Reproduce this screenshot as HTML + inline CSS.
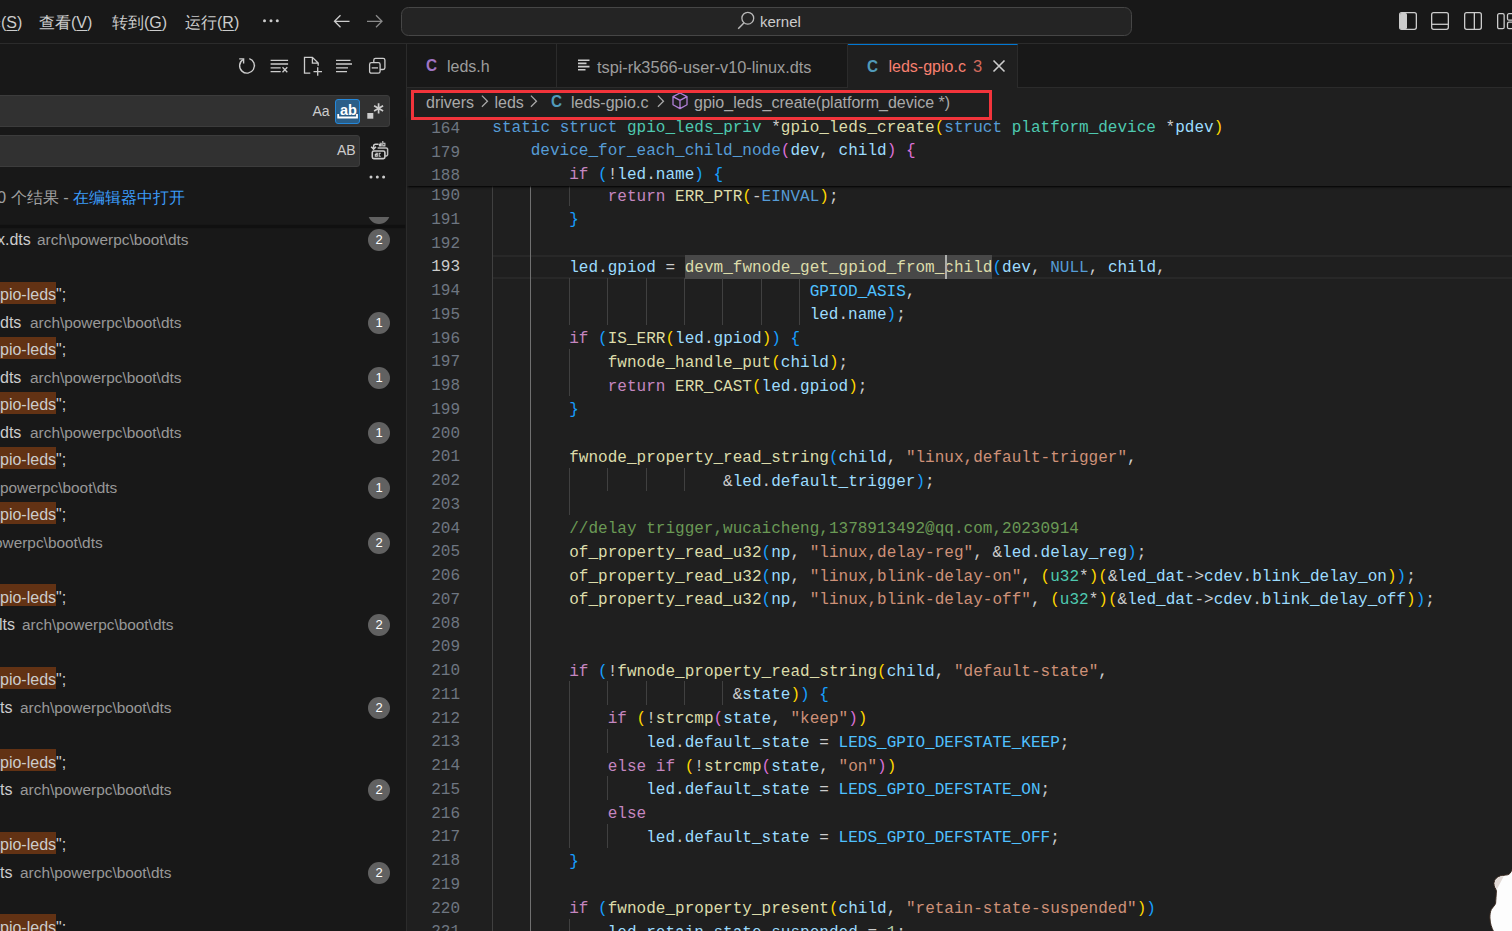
<!DOCTYPE html>
<html><head><meta charset="utf-8">
<style>
*{margin:0;padding:0;box-sizing:border-box}
html,body{width:1512px;height:931px;overflow:hidden;background:#1f1f1f}
body{position:relative;font-family:"Liberation Sans",sans-serif;color:#cccccc}
.abs{position:absolute}
#title{position:absolute;left:0;top:0;width:1512px;height:43.75px;background:#181818;border-bottom:1px solid #2b2b2b}
.menu{position:absolute;top:13px;font-size:16px;color:#cccccc;white-space:nowrap}
.menu u{text-decoration:underline;text-underline-offset:2px}
#cc{position:absolute;left:401px;top:7px;width:731px;height:29px;border:1px solid #464646;border-radius:7.5px;background:#242424}
#sidebar{position:absolute;left:0;top:43.75px;width:407px;height:887.25px;background:#181818;border-right:1px solid #2b2b2b;overflow:hidden}
#tabs{position:absolute;left:407px;top:43.75px;width:1105px;height:43.75px;background:#181818;border-bottom:1px solid #2b2b2b}
.tab{position:absolute;top:0;height:43.75px;border-right:1px solid #2b2b2b;font-size:16px;white-space:nowrap}
#bc{position:absolute;left:407px;top:87.5px;width:1105px;height:27px;background:#1f1f1f;font-size:16px;color:#a9a9a9;white-space:nowrap}
#code{position:absolute;left:407px;top:114.5px;width:1105px;height:816.5px;overflow:hidden;background:#1f1f1f}
#codein{position:absolute;left:-407px;top:-114.5px;width:1512px;height:931px}
.row{position:absolute;left:0;width:1512px;height:23.75px}
.ln{position:absolute;top:2.6px;left:407px;width:53px;text-align:right;font-family:"Liberation Mono",monospace;font-size:16px;line-height:23.75px;color:#6e7681}
.ln.act{color:#cccccc}
.cl{position:absolute;top:3px;letter-spacing:0.016px;font-family:"Liberation Mono",monospace;font-size:16px;line-height:23.75px;white-space:pre;color:#cccccc}
.gd{position:absolute;top:0;width:1px;height:23.75px;background:#404040}
.ga{background:#707070}
.curl{position:absolute;left:492px;top:1px;width:1020px;height:24.3px;border-top:2.5px solid #282828;border-bottom:2.5px solid #282828}
.wh{position:absolute;left:684.6px;top:1.3px;width:307.6px;height:23.5px;background:#484848}
.cur{position:absolute;left:944.8px;top:1.3px;width:2px;height:23.5px;background:#aeafad}
#sticky{position:absolute;left:407px;top:114.5px;width:1105px;height:71.25px;background:#1f1f1f;box-shadow:0 2px 2px -1px #000}
#stickyin{position:absolute;left:-407px;top:-114.5px}
#stickyin .ln{top:3.3px}
#stickyin .cl{top:2px}
.k{color:#569cd6}.c{color:#c586c0}.t{color:#4ec9b0}.f{color:#dcdcaa}.v{color:#9cdcfe}.m{color:#569cd6}
.e{color:#4fc1ff}.s{color:#ce9178}.g{color:#6a9955}.p{color:#cccccc}.n{color:#b5cea8}
.b1{color:#ffd700}.b2{color:#da70d6}.b3{color:#179fff}
.srow{position:absolute;left:0;width:406px;height:27.5px;font-size:16px;line-height:27.5px;white-space:nowrap}
.badge{position:absolute;left:368px;top:3px;width:22px;height:22px;border-radius:11px;background:#616161;color:#ffffff;font-size:13px;line-height:22px;text-align:center}
.path{color:#989898;font-size:15.4px}
.hl{background:#623214}
svg{position:absolute;overflow:visible}
</style></head><body>
<div id="title">
  <div class="menu" style="left:-31px">选择(<u>S</u>)</div>
  <div class="menu" style="left:39px">查看(<u>V</u>)</div>
  <div class="menu" style="left:112px">转到(<u>G</u>)</div>
  <div class="menu" style="left:185px">运行(<u>R</u>)</div>
  <svg style="left:262px;top:18px" width="18" height="6"><circle cx="2.5" cy="2.8" r="1.5" fill="#ccc"/><circle cx="9" cy="2.8" r="1.5" fill="#ccc"/><circle cx="15.3" cy="2.8" r="1.5" fill="#ccc"/></svg>
  <svg style="left:333px;top:14px" width="18" height="15" viewBox="0 0 18 15"><path d="M1.5 7.3H16.5M7.5 1.3L1.5 7.3L7.5 13.3" stroke="#cccccc" stroke-width="1.3" fill="none"/></svg>
  <svg style="left:366px;top:14px" width="18" height="15" viewBox="0 0 18 15"><path d="M1 7.3H16M10 1.3L16 7.3L10 13.3" stroke="#8a8a8a" stroke-width="1.3" fill="none"/></svg>
  <div id="cc"></div>
  <svg style="left:737px;top:11px" width="18" height="20" viewBox="0 0 18 20"><circle cx="10.8" cy="7.2" r="5.9" stroke="#b8b8b8" stroke-width="1.3" fill="none"/><path d="M7.1 11.8L1.2 17.7" stroke="#b8b8b8" stroke-width="1.5"/></svg>
  <div class="menu" style="left:760px;top:13px;font-size:15px">kernel</div>
  <svg style="left:1399px;top:12px" width="18" height="18" viewBox="0 0 18 18"><rect x="0.65" y="0.65" width="16.7" height="16.7" rx="2" stroke="#cccccc" stroke-width="1.3" fill="none"/><rect x="1" y="1" width="7" height="16" rx="1.5" fill="#cccccc"/></svg>
  <svg style="left:1431px;top:12px" width="18" height="18" viewBox="0 0 18 18"><rect x="0.65" y="0.65" width="16.7" height="16.7" rx="2" stroke="#cccccc" stroke-width="1.3" fill="none"/><path d="M1 12.3H17" stroke="#cccccc" stroke-width="1.3"/></svg>
  <svg style="left:1464px;top:12px" width="18" height="18" viewBox="0 0 18 18"><rect x="0.65" y="0.65" width="16.7" height="16.7" rx="2" stroke="#cccccc" stroke-width="1.3" fill="none"/><path d="M10.35 1V17" stroke="#cccccc" stroke-width="1.3"/></svg>
  <svg style="left:1497px;top:13px" width="18" height="16" viewBox="0 0 18 16"><rect x="0.65" y="0.65" width="6.5" height="15" rx="1.5" stroke="#cccccc" stroke-width="1.3" fill="none"/><rect x="10.5" y="0.65" width="6.5" height="6.5" rx="1.5" stroke="#cccccc" stroke-width="1.3" fill="none"/><rect x="10.5" y="9.15" width="6.5" height="6.5" rx="1.5" stroke="#cccccc" stroke-width="1.3" fill="none"/></svg>
</div>

<div id="sidebar">
<svg style="left:234px;top:10.25px" width="26" height="24" viewBox="0 0 26 24"><path d="M15.3 4.7A7.4 7.4 0 1 1 8.9 5.6" stroke="#cccccc" stroke-width="1.4" fill="none"/><path d="M5.2 4.9H9.6V9.4" stroke="#cccccc" stroke-width="1.4" fill="none"/></svg>
<svg style="left:270px;top:12.25px" width="20" height="20" viewBox="0 0 20 20"><path d="M0.6 4.3H18.1M0.6 8H18.1M0.6 11.9H10.7M0.6 15.6H10.7" stroke="#cccccc" stroke-width="1.3"/><path d="M12.5 11.2L17.3 16.2M17.3 11.2L12.5 16.2" stroke="#cccccc" stroke-width="1.3"/></svg>
<svg style="left:303px;top:12.25px" width="22" height="22" viewBox="0 0 22 22"><path d="M7.3 17.2H1.5V1.3H9.4L15.2 7.1V9.8M9.4 1.3V7.1H15.2" stroke="#cccccc" stroke-width="1.3" fill="none"/><path d="M14.7 11.3V19.8M10.5 15.6H19" stroke="#cccccc" stroke-width="1.3"/></svg>
<svg style="left:335px;top:12.25px" width="20" height="20" viewBox="0 0 20 20"><path d="M1 4.3H15.5M1 8H17M1 11.9H13M1 15.6H12" stroke="#cccccc" stroke-width="1.3"/></svg>
<svg style="left:368px;top:12.25px" width="20" height="20" viewBox="0 0 20 20"><rect x="1.6" y="6.6" width="10.5" height="10.6" rx="1.8" stroke="#cccccc" stroke-width="1.3" fill="none"/><path d="M5.8 6.6V4.1A1.8 1.8 0 0 1 7.6 2.3H15.1A1.8 1.8 0 0 1 16.9 4.1V11.7A1.8 1.8 0 0 1 15.1 13.5H12.1" stroke="#cccccc" stroke-width="1.3" fill="none"/><path d="M3.7 11.9H10" stroke="#cccccc" stroke-width="1.3"/></svg>
<div class="abs" style="left:-4px;top:51.25px;width:393.5px;height:31.6px;background:#313131;border:1px solid #3c3c3c;border-radius:3px"></div>
<div class="abs" style="left:312.5px;top:59.25px;font-size:14px;color:#cccccc">Aa</div>
<div class="abs" style="left:334.9px;top:55.15px;width:25.1px;height:25.2px;background:#2a5e88;border:1px solid #2488db;border-radius:3px"></div>
<div class="abs" style="left:340px;top:57.75px;font-size:14.5px;font-weight:bold;color:#ffffff">ab</div>
<svg style="left:337px;top:70.55px" width="22" height="6" viewBox="0 0 22 6"><path d="M1.2 0V3.5H20V0" stroke="#ffffff" stroke-width="1.8" fill="none"/></svg>
<svg style="left:366px;top:56.25px" width="20" height="20" viewBox="0 0 20 20"><rect x="1.3" y="13" width="6" height="5.7" fill="#cccccc"/><path d="M12.6 3.2V13.6M8.1 5.8L17.1 11M17.1 5.8L8.1 11" stroke="#cccccc" stroke-width="1.7"/></svg>
<div class="abs" style="left:-4px;top:91.25px;width:364px;height:31.5px;background:#313131;border:1px solid #3c3c3c;border-radius:3px"></div>
<div class="abs" style="left:337px;top:98.25px;font-size:14px;color:#cccccc">AB</div>
<svg style="left:365px;top:92.25px" width="28" height="28" viewBox="0 0 28 28"><path d="M12.6 11.9H21.2A1.4 1.4 0 0 1 22.6 13.3V18.6A1.4 1.4 0 0 1 21.2 20H20.2" stroke="#bdbdbd" stroke-width="1.5" fill="none"/><rect x="7.3" y="15" width="12.6" height="7.6" rx="1.5" stroke="#cccccc" stroke-width="1.6" fill="#181818"/><path d="M10.5 17.2H12.3V20.3H10.3V18.6H12.3M15.8 17.2H14.2V20.3H15.8" stroke="#cccccc" stroke-width="1.1" fill="none"/><path d="M14.5 7.3H16.2V9.9H14.4V8.6H16.2M17.8 5V9.9H19.9V7.3H17.8" stroke="#cccccc" stroke-width="1.1" fill="none"/><path d="M13.6 8.2H10.6A2 2 0 0 0 8.6 10.2V13M6.2 10.7L8.6 13.2L11 10.7" stroke="#cccccc" stroke-width="1.5" fill="none"/></svg>
<svg style="left:369px;top:130.25px" width="18" height="6"><circle cx="2" cy="3" r="1.5" fill="#ccc"/><circle cx="8.3" cy="3" r="1.5" fill="#ccc"/><circle cx="14.6" cy="3" r="1.5" fill="#ccc"/></svg>
<div class="abs" style="left:-3px;top:143.25px;font-size:16.4px;color:#a0a0a0;white-space:nowrap">0 个结果 - <span style="color:#3b9cf8">在编辑器中打开</span></div>
<div class="abs" style="left:0;top:173.25px;width:405px;height:714.00px;overflow:hidden"><div class="srow" style="top:-18.50px"><span class="abs path" style="left:0.0px"></span><div class="badge">2</div></div>
<div class="srow" style="top:9.00px"><span class="abs" style="left:-3.0px;color:#cccccc">x.dts</span><span class="abs path" style="left:37.0px">arch\powerpc\boot\dts</span><div class="badge">2</div></div>
<div class="srow" style="top:64.00px"><span class="abs hl" style="left:-30px;top:0.8px;width:86px;height:22px"></span><span class="abs" style="left:0px">pio-leds";</span></div>
<div class="srow" style="top:91.50px"><span class="abs" style="left:0.0px;color:#cccccc">dts</span><span class="abs path" style="left:30.0px">arch\powerpc\boot\dts</span><div class="badge">1</div></div>
<div class="srow" style="top:119.00px"><span class="abs hl" style="left:-30px;top:0.8px;width:86px;height:22px"></span><span class="abs" style="left:0px">pio-leds";</span></div>
<div class="srow" style="top:146.50px"><span class="abs" style="left:0.0px;color:#cccccc">dts</span><span class="abs path" style="left:30.0px">arch\powerpc\boot\dts</span><div class="badge">1</div></div>
<div class="srow" style="top:174.00px"><span class="abs hl" style="left:-30px;top:0.8px;width:86px;height:22px"></span><span class="abs" style="left:0px">pio-leds";</span></div>
<div class="srow" style="top:201.50px"><span class="abs" style="left:0.0px;color:#cccccc">dts</span><span class="abs path" style="left:30.0px">arch\powerpc\boot\dts</span><div class="badge">1</div></div>
<div class="srow" style="top:229.00px"><span class="abs hl" style="left:-30px;top:0.8px;width:86px;height:22px"></span><span class="abs" style="left:0px">pio-leds";</span></div>
<div class="srow" style="top:256.50px"><span class="abs path" style="left:0.0px">powerpc\boot\dts</span><div class="badge">1</div></div>
<div class="srow" style="top:284.00px"><span class="abs hl" style="left:-30px;top:0.8px;width:86px;height:22px"></span><span class="abs" style="left:0px">pio-leds";</span></div>
<div class="srow" style="top:311.50px"><span class="abs path" style="left:-6.0px">owerpc\boot\dts</span><div class="badge">2</div></div>
<div class="srow" style="top:366.50px"><span class="abs hl" style="left:-30px;top:0.8px;width:86px;height:22px"></span><span class="abs" style="left:0px">pio-leds";</span></div>
<div class="srow" style="top:394.00px"><span class="abs" style="left:-1.0px;color:#cccccc">lts</span><span class="abs path" style="left:22.0px">arch\powerpc\boot\dts</span><div class="badge">2</div></div>
<div class="srow" style="top:449.00px"><span class="abs hl" style="left:-30px;top:0.8px;width:86px;height:22px"></span><span class="abs" style="left:0px">pio-leds";</span></div>
<div class="srow" style="top:476.50px"><span class="abs" style="left:0.0px;color:#cccccc">ts</span><span class="abs path" style="left:20.0px">arch\powerpc\boot\dts</span><div class="badge">2</div></div>
<div class="srow" style="top:531.50px"><span class="abs hl" style="left:-30px;top:0.8px;width:86px;height:22px"></span><span class="abs" style="left:0px">pio-leds";</span></div>
<div class="srow" style="top:559.00px"><span class="abs" style="left:0.0px;color:#cccccc">ts</span><span class="abs path" style="left:20.0px">arch\powerpc\boot\dts</span><div class="badge">2</div></div>
<div class="srow" style="top:614.00px"><span class="abs hl" style="left:-30px;top:0.8px;width:86px;height:22px"></span><span class="abs" style="left:0px">pio-leds";</span></div>
<div class="srow" style="top:641.50px"><span class="abs" style="left:0.0px;color:#cccccc">ts</span><span class="abs path" style="left:20.0px">arch\powerpc\boot\dts</span><div class="badge">2</div></div>
<div class="srow" style="top:696.50px"><span class="abs hl" style="left:-30px;top:0.8px;width:86px;height:22px"></span><span class="abs" style="left:0px">pio-leds";</span></div></div>
<div class="abs" style="left:0;top:181.25px;width:405px;height:2.5px;box-shadow:0 0 1px 0 #0b0b0b;background:#101010"></div>
</div>

<div id="tabs">
<div class="tab" style="left:0;width:150px"><span class="abs" style="left:18.5px;top:12px;font-weight:bold;color:#a074c4;font-size:17px;display:inline-block;transform:scaleX(0.9);transform-origin:0 0">C</span><span class="abs" style="left:40px;top:14px;color:#9d9d9d">leds.h</span></div>
<div class="tab" style="left:150px;width:291px"><svg style="left:20.5px;top:15.5px" width="12" height="13" viewBox="0 0 12 13"><path d="M0 1.2H11.5M0 4.4H8.5M0 7.6H11.5M0 10.8H7.5" stroke="#cccccc" stroke-width="1.6"/></svg><span class="abs" style="left:40px;top:14px;color:#9d9d9d;font-size:16.3px">tspi-rk3566-user-v10-linux.dts</span></div>
<div class="tab" style="left:441px;width:169.5px;background:#1f1f1f;height:44.75px;border-top:1.5px solid #0078d4"><span class="abs" style="left:19px;top:12px;font-weight:bold;color:#519aba;font-size:17px;display:inline-block;transform:scaleX(0.9);transform-origin:0 0">C</span><span class="abs" style="left:40.5px;top:13.5px;color:#f88070">leds-gpio.c</span><span class="abs" style="left:125px;top:12px;color:#d0695c;font-size:16.5px">3</span><svg style="left:145px;top:15.5px" width="12" height="12" viewBox="0 0 12 12"><path d="M0.5 0.5L11.5 11.5M11.5 0.5L0.5 11.5" stroke="#cccccc" stroke-width="1.6"/></svg></div>
</div>
<div id="bc">
<span class="abs" style="left:19px;top:6px">drivers</span>
<svg style="left:74px;top:7.6px" width="9" height="13" viewBox="0 0 9 13"><path d="M0.9 0.6L6.5 6.2L0.9 11.8" stroke="#a9a9a9" stroke-width="1.25" fill="none"/></svg>
<span class="abs" style="left:87.5px;top:6px">leds</span>
<svg style="left:123px;top:7.6px" width="9" height="13" viewBox="0 0 9 13"><path d="M0.9 0.6L6.5 6.2L0.9 11.8" stroke="#a9a9a9" stroke-width="1.25" fill="none"/></svg>
<span class="abs" style="left:143.5px;top:4.5px;font-weight:bold;color:#519aba;font-size:17px;display:inline-block;transform:scaleX(0.9);transform-origin:0 0">C</span>
<span class="abs" style="left:164px;top:6px">leds-gpio.c</span>
<svg style="left:250px;top:7.6px" width="9" height="13" viewBox="0 0 9 13"><path d="M0.9 0.6L6.5 6.2L0.9 11.8" stroke="#a9a9a9" stroke-width="1.25" fill="none"/></svg>
<svg style="left:264px;top:4.5px" width="18" height="18" viewBox="0 0 18 18"><path d="M9 1L16 4.6V12.8L9 16.6L2 12.8V4.6Z M2 4.6L9 8.4L16 4.6 M9 8.4V16.6" stroke="#b180d7" stroke-width="1.3" fill="none" stroke-linejoin="round"/></svg>
<span class="abs" style="left:287px;top:6px">gpio_leds_create(platform_device *)</span>
</div>

<div id="code"><div id="codein">
<div class="row" style="top:182.50px">
<div class="ln">190</div>
<div class="gd" style="left:492.00px"></div>
<div class="gd ga" style="left:530.00px"></div>
<div class="gd" style="left:569.00px"></div>
<div class="cl" style="left:607.69px"><span class="c">return </span><span class="f">ERR_PTR</span><span class="b1">(</span><span class="p">-</span><span class="m">EINVAL</span><span class="b1">)</span><span class="p">;</span></div>
</div>
<div class="row" style="top:206.25px">
<div class="ln">191</div>
<div class="gd" style="left:492.00px"></div>
<div class="gd ga" style="left:530.00px"></div>
<div class="cl" style="left:569.23px"><span class="b3">}</span></div>
</div>
<div class="row" style="top:230.00px">
<div class="ln">192</div>
<div class="gd" style="left:492.00px"></div>
<div class="gd ga" style="left:530.00px"></div>
</div>
<div class="row" style="top:253.75px">
<div class="curl"></div><div class="wh"></div>
<div class="ln act">193</div>
<div class="gd" style="left:492.00px"></div>
<div class="gd ga" style="left:530.00px"></div>
<div class="cl" style="left:569.23px"><span class="v">led</span><span class="p">.</span><span class="v">gpiod </span><span class="p">= </span><span class="f">devm_fwnode_get_gpiod_from_child</span><span class="b3">(</span><span class="v">dev</span><span class="p">, </span><span class="m">NULL</span><span class="p">, </span><span class="v">child</span><span class="p">,</span></div>
<div class="cur"></div>
</div>
<div class="row" style="top:277.50px">
<div class="ln">194</div>
<div class="gd" style="left:492.00px"></div>
<div class="gd ga" style="left:530.00px"></div>
<div class="gd" style="left:569.00px"></div>
<div class="gd" style="left:607.00px"></div>
<div class="gd" style="left:646.00px"></div>
<div class="gd" style="left:684.00px"></div>
<div class="gd" style="left:722.00px"></div>
<div class="gd" style="left:761.00px"></div>
<div class="gd" style="left:799.00px"></div>
<div class="cl" style="left:809.63px"><span class="e">GPIOD_ASIS</span><span class="p">,</span></div>
</div>
<div class="row" style="top:301.25px">
<div class="ln">195</div>
<div class="gd" style="left:492.00px"></div>
<div class="gd ga" style="left:530.00px"></div>
<div class="gd" style="left:569.00px"></div>
<div class="gd" style="left:607.00px"></div>
<div class="gd" style="left:646.00px"></div>
<div class="gd" style="left:684.00px"></div>
<div class="gd" style="left:722.00px"></div>
<div class="gd" style="left:761.00px"></div>
<div class="gd" style="left:799.00px"></div>
<div class="cl" style="left:809.63px"><span class="v">led</span><span class="p">.</span><span class="v">name</span><span class="b3">)</span><span class="p">;</span></div>
</div>
<div class="row" style="top:325.00px">
<div class="ln">196</div>
<div class="gd" style="left:492.00px"></div>
<div class="gd ga" style="left:530.00px"></div>
<div class="cl" style="left:569.23px"><span class="c">if </span><span class="b3">(</span><span class="f">IS_ERR</span><span class="b1">(</span><span class="v">led</span><span class="p">.</span><span class="v">gpiod</span><span class="b1">)</span><span class="b3">) </span><span class="b3">{</span></div>
</div>
<div class="row" style="top:348.75px">
<div class="ln">197</div>
<div class="gd" style="left:492.00px"></div>
<div class="gd ga" style="left:530.00px"></div>
<div class="gd" style="left:569.00px"></div>
<div class="cl" style="left:607.69px"><span class="f">fwnode_handle_put</span><span class="b1">(</span><span class="v">child</span><span class="b1">)</span><span class="p">;</span></div>
</div>
<div class="row" style="top:372.50px">
<div class="ln">198</div>
<div class="gd" style="left:492.00px"></div>
<div class="gd ga" style="left:530.00px"></div>
<div class="gd" style="left:569.00px"></div>
<div class="cl" style="left:607.69px"><span class="c">return </span><span class="f">ERR_CAST</span><span class="b1">(</span><span class="v">led</span><span class="p">.</span><span class="v">gpiod</span><span class="b1">)</span><span class="p">;</span></div>
</div>
<div class="row" style="top:396.25px">
<div class="ln">199</div>
<div class="gd" style="left:492.00px"></div>
<div class="gd ga" style="left:530.00px"></div>
<div class="cl" style="left:569.23px"><span class="b3">}</span></div>
</div>
<div class="row" style="top:420.00px">
<div class="ln">200</div>
<div class="gd" style="left:492.00px"></div>
<div class="gd ga" style="left:530.00px"></div>
</div>
<div class="row" style="top:443.75px">
<div class="ln">201</div>
<div class="gd" style="left:492.00px"></div>
<div class="gd ga" style="left:530.00px"></div>
<div class="cl" style="left:569.23px"><span class="f">fwnode_property_read_string</span><span class="b3">(</span><span class="v">child</span><span class="p">, </span><span class="s">"linux,default-trigger"</span><span class="p">,</span></div>
</div>
<div class="row" style="top:467.50px">
<div class="ln">202</div>
<div class="gd" style="left:492.00px"></div>
<div class="gd ga" style="left:530.00px"></div>
<div class="gd" style="left:569.00px"></div>
<div class="gd" style="left:607.00px"></div>
<div class="gd" style="left:646.00px"></div>
<div class="gd" style="left:684.00px"></div>
<div class="cl" style="left:723.08px"><span class="p">&amp;</span><span class="v">led</span><span class="p">.</span><span class="v">default_trigger</span><span class="b3">)</span><span class="p">;</span></div>
</div>
<div class="row" style="top:491.25px">
<div class="ln">203</div>
<div class="gd" style="left:492.00px"></div>
<div class="gd ga" style="left:530.00px"></div>
<div class="gd" style="left:569.00px"></div>
</div>
<div class="row" style="top:515.00px">
<div class="ln">204</div>
<div class="gd" style="left:492.00px"></div>
<div class="gd ga" style="left:530.00px"></div>
<div class="cl" style="left:569.23px"><span class="g">//delay trigger,wucaicheng,1378913492@qq.com,20230914</span></div>
</div>
<div class="row" style="top:538.75px">
<div class="ln">205</div>
<div class="gd" style="left:492.00px"></div>
<div class="gd ga" style="left:530.00px"></div>
<div class="cl" style="left:569.23px"><span class="f">of_property_read_u32</span><span class="b3">(</span><span class="v">np</span><span class="p">, </span><span class="s">"linux,delay-reg"</span><span class="p">, &amp;</span><span class="v">led</span><span class="p">.</span><span class="v">delay_reg</span><span class="b3">)</span><span class="p">;</span></div>
</div>
<div class="row" style="top:562.50px">
<div class="ln">206</div>
<div class="gd" style="left:492.00px"></div>
<div class="gd ga" style="left:530.00px"></div>
<div class="cl" style="left:569.23px"><span class="f">of_property_read_u32</span><span class="b3">(</span><span class="v">np</span><span class="p">, </span><span class="s">"linux,blink-delay-on"</span><span class="p">, </span><span class="b1">(</span><span class="t">u32</span><span class="p">*</span><span class="b1">)</span><span class="b1">(</span><span class="p">&amp;</span><span class="v">led_dat</span><span class="p">-&gt;</span><span class="v">cdev</span><span class="p">.</span><span class="v">blink_delay_on</span><span class="b1">)</span><span class="b3">)</span><span class="p">;</span></div>
</div>
<div class="row" style="top:586.25px">
<div class="ln">207</div>
<div class="gd" style="left:492.00px"></div>
<div class="gd ga" style="left:530.00px"></div>
<div class="cl" style="left:569.23px"><span class="f">of_property_read_u32</span><span class="b3">(</span><span class="v">np</span><span class="p">, </span><span class="s">"linux,blink-delay-off"</span><span class="p">, </span><span class="b1">(</span><span class="t">u32</span><span class="p">*</span><span class="b1">)</span><span class="b1">(</span><span class="p">&amp;</span><span class="v">led_dat</span><span class="p">-&gt;</span><span class="v">cdev</span><span class="p">.</span><span class="v">blink_delay_off</span><span class="b1">)</span><span class="b3">)</span><span class="p">;</span></div>
</div>
<div class="row" style="top:610.00px">
<div class="ln">208</div>
<div class="gd" style="left:492.00px"></div>
<div class="gd ga" style="left:530.00px"></div>
</div>
<div class="row" style="top:633.75px">
<div class="ln">209</div>
<div class="gd" style="left:492.00px"></div>
<div class="gd ga" style="left:530.00px"></div>
</div>
<div class="row" style="top:657.50px">
<div class="ln">210</div>
<div class="gd" style="left:492.00px"></div>
<div class="gd ga" style="left:530.00px"></div>
<div class="cl" style="left:569.23px"><span class="c">if </span><span class="b3">(</span><span class="p">!</span><span class="f">fwnode_property_read_string</span><span class="b1">(</span><span class="v">child</span><span class="p">, </span><span class="s">"default-state"</span><span class="p">,</span></div>
</div>
<div class="row" style="top:681.25px">
<div class="ln">211</div>
<div class="gd" style="left:492.00px"></div>
<div class="gd ga" style="left:530.00px"></div>
<div class="gd" style="left:569.00px"></div>
<div class="gd" style="left:607.00px"></div>
<div class="gd" style="left:646.00px"></div>
<div class="gd" style="left:684.00px"></div>
<div class="gd" style="left:722.00px"></div>
<div class="cl" style="left:732.70px"><span class="p">&amp;</span><span class="v">state</span><span class="b1">)</span><span class="b3">) </span><span class="b3">{</span></div>
</div>
<div class="row" style="top:705.00px">
<div class="ln">212</div>
<div class="gd" style="left:492.00px"></div>
<div class="gd ga" style="left:530.00px"></div>
<div class="gd" style="left:569.00px"></div>
<div class="cl" style="left:607.69px"><span class="c">if </span><span class="b1">(</span><span class="p">!</span><span class="f">strcmp</span><span class="b2">(</span><span class="v">state</span><span class="p">, </span><span class="s">"keep"</span><span class="b2">)</span><span class="b1">)</span></div>
</div>
<div class="row" style="top:728.75px">
<div class="ln">213</div>
<div class="gd" style="left:492.00px"></div>
<div class="gd ga" style="left:530.00px"></div>
<div class="gd" style="left:569.00px"></div>
<div class="gd" style="left:607.00px"></div>
<div class="cl" style="left:646.16px"><span class="v">led</span><span class="p">.</span><span class="v">default_state </span><span class="p">= </span><span class="e">LEDS_GPIO_DEFSTATE_KEEP</span><span class="p">;</span></div>
</div>
<div class="row" style="top:752.50px">
<div class="ln">214</div>
<div class="gd" style="left:492.00px"></div>
<div class="gd ga" style="left:530.00px"></div>
<div class="gd" style="left:569.00px"></div>
<div class="cl" style="left:607.69px"><span class="c">else if </span><span class="b1">(</span><span class="p">!</span><span class="f">strcmp</span><span class="b2">(</span><span class="v">state</span><span class="p">, </span><span class="s">"on"</span><span class="b2">)</span><span class="b1">)</span></div>
</div>
<div class="row" style="top:776.25px">
<div class="ln">215</div>
<div class="gd" style="left:492.00px"></div>
<div class="gd ga" style="left:530.00px"></div>
<div class="gd" style="left:569.00px"></div>
<div class="gd" style="left:607.00px"></div>
<div class="cl" style="left:646.16px"><span class="v">led</span><span class="p">.</span><span class="v">default_state </span><span class="p">= </span><span class="e">LEDS_GPIO_DEFSTATE_ON</span><span class="p">;</span></div>
</div>
<div class="row" style="top:800.00px">
<div class="ln">216</div>
<div class="gd" style="left:492.00px"></div>
<div class="gd ga" style="left:530.00px"></div>
<div class="gd" style="left:569.00px"></div>
<div class="cl" style="left:607.69px"><span class="c">else</span></div>
</div>
<div class="row" style="top:823.75px">
<div class="ln">217</div>
<div class="gd" style="left:492.00px"></div>
<div class="gd ga" style="left:530.00px"></div>
<div class="gd" style="left:569.00px"></div>
<div class="gd" style="left:607.00px"></div>
<div class="cl" style="left:646.16px"><span class="v">led</span><span class="p">.</span><span class="v">default_state </span><span class="p">= </span><span class="e">LEDS_GPIO_DEFSTATE_OFF</span><span class="p">;</span></div>
</div>
<div class="row" style="top:847.50px">
<div class="ln">218</div>
<div class="gd" style="left:492.00px"></div>
<div class="gd ga" style="left:530.00px"></div>
<div class="cl" style="left:569.23px"><span class="b3">}</span></div>
</div>
<div class="row" style="top:871.25px">
<div class="ln">219</div>
<div class="gd" style="left:492.00px"></div>
<div class="gd ga" style="left:530.00px"></div>
</div>
<div class="row" style="top:895.00px">
<div class="ln">220</div>
<div class="gd" style="left:492.00px"></div>
<div class="gd ga" style="left:530.00px"></div>
<div class="cl" style="left:569.23px"><span class="c">if </span><span class="b3">(</span><span class="f">fwnode_property_present</span><span class="b1">(</span><span class="v">child</span><span class="p">, </span><span class="s">"retain-state-suspended"</span><span class="b1">)</span><span class="b3">)</span></div>
</div>
<div class="row" style="top:918.75px">
<div class="ln">221</div>
<div class="gd" style="left:492.00px"></div>
<div class="gd ga" style="left:530.00px"></div>
<div class="gd" style="left:569.00px"></div>
<div class="cl" style="left:607.69px"><span class="v">led</span><span class="p">.</span><span class="v">retain_state_suspended </span><span class="p">= </span><span class="n">1</span><span class="p">;</span></div>
</div>
</div></div>
<div id="sticky"><div id="stickyin">
<div class="row" style="top:114.50px">
<div class="ln">164</div>
<div class="cl" style="left:492.30px"><span class="k">static </span><span class="k">struct </span><span class="t">gpio_leds_priv </span><span class="p">*</span><span class="f">gpio_leds_create</span><span class="b1">(</span><span class="k">struct </span><span class="t">platform_device </span><span class="p">*</span><span class="v">pdev</span><span class="b1">)</span></div>
</div>
<div class="row" style="top:138.25px">
<div class="ln">179</div>
<div class="cl" style="left:530.76px"><span class="m">device_for_each_child_node</span><span class="b2">(</span><span class="v">dev</span><span class="p">, </span><span class="v">child</span><span class="b2">) </span><span class="b2">{</span></div>
</div>
<div class="row" style="top:162.00px">
<div class="ln">188</div>
<div class="cl" style="left:569.23px"><span class="c">if </span><span class="b3">(</span><span class="p">!</span><span class="v">led</span><span class="p">.</span><span class="v">name</span><span class="b3">) </span><span class="b3">{</span></div>
</div>
</div></div>
<svg style="left:1485px;top:865px" width="27" height="66" viewBox="0 0 27 66"><path d="M27 4.5C26 7.5 24.5 9.5 22.5 9.8C21 10 19.5 10.2 17.5 10.5C12.5 11 9 14.5 9 18.6C9 21.5 10.5 23.5 11.4 25.5C11.2 30 10.8 35 10.6 38.4C9.5 41 7.5 42.5 6.3 44.5C5 47.5 4.9 50 4.9 52.9C5 59 7 63 8.3 66L9 69L32 69L32 2Z" fill="#fdfdfd" stroke="#3a2a20" stroke-width="1"/><path d="M17.5 11.2C12.8 11.7 9.8 14.8 9.8 18.6C9.8 21 10.8 23 11.9 24.3L18.8 11.2Z" fill="#e2dad6"/></svg>
<div class="abs" style="left:411px;top:90px;width:581px;height:29.5px;border:3px solid #f2343b"></div>
</body></html>
